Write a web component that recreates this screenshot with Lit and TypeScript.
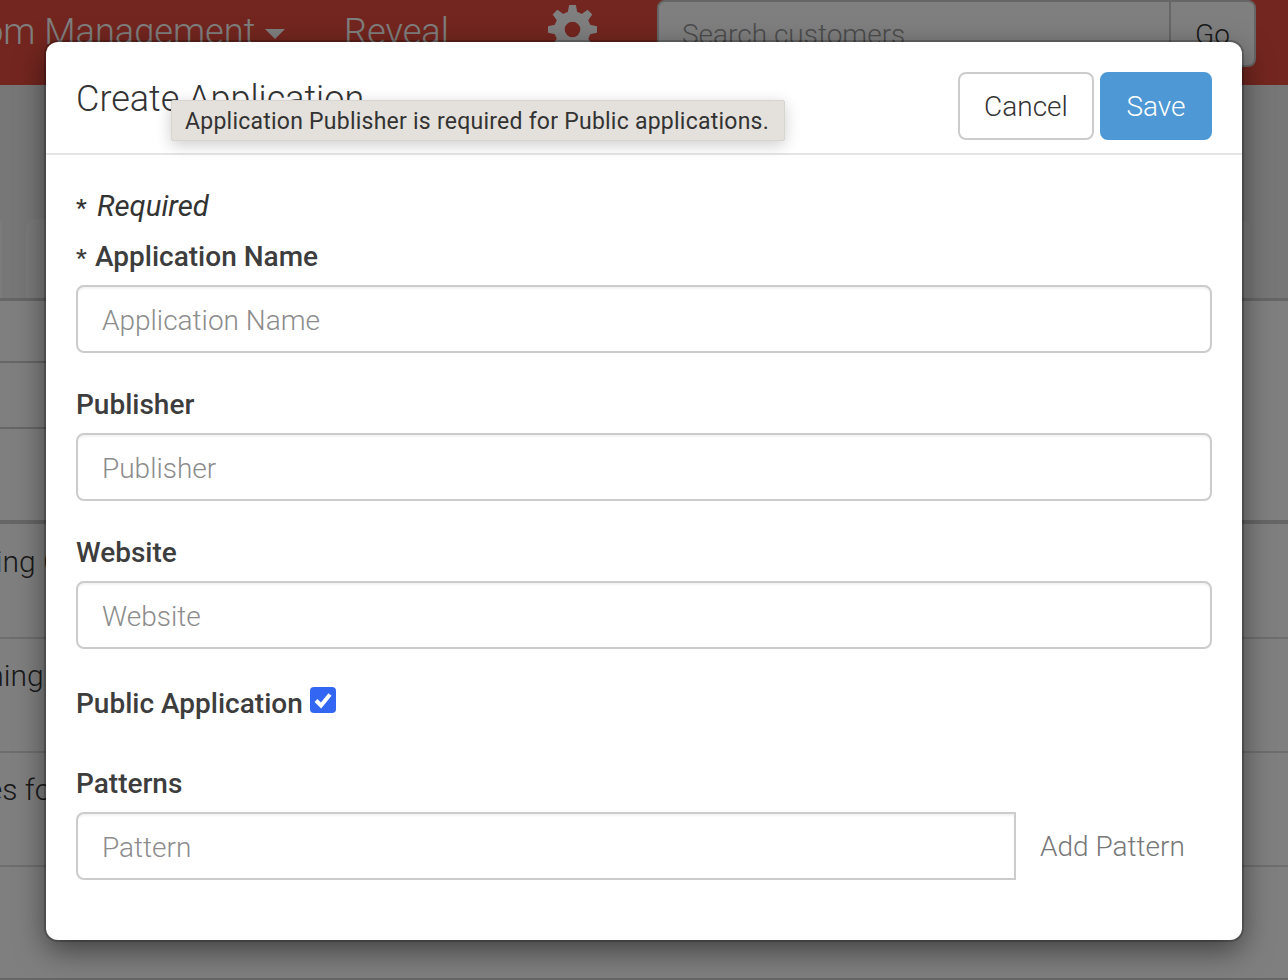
import { LitElement, html, css, svg } from "lit";
import { customElement } from "lit/decorators.js";

const gear = svg`<path fill-rule="evenodd" d="M21 0h6l1.2 6.3c1.4.4 2.8 1 4 1.700L37.600 4.300l4.200 4.200-3.700 5.300c.7 1.300 1.300 2.600 1.700 4L46 19v6l-6.200 1.200c-.4 1.400-1 2.800-1.700 4l3.700 5.300-4.200 4.200-5.400-3.700c-1.200.7-2.600 1.300-4 1.700L27 44h-6l-1.200-6.300c-1.400-.4-2.800-1-4-1.700l-5.400 3.700-4.200-4.200 3.700-5.300c-.7-1.200-1.300-2.600-1.700-4L2 25v-6l6.200-1.200c.4-1.400 1-2.700 1.700-4L6.200 8.500l4.200-4.200L15.800 8c1.200-.7 2.600-1.300 4-1.700zM24 15a7 7 0 1 0 0 14 7 7 0 0 0 0-14z"/>`;

@customElement("app-root")
export class AppRoot extends LitElement {
  static styles = css`
    :host {
      display: block;
      position: relative;
      width: 1288px;
      height: 980px;
      overflow: hidden;
      background: #fff;
      font-family: Roboto, "Liberation Sans", sans-serif;
      color: #333;
    }
    .page { display: flex; flex-direction: column; height: 980px; }
    .nav {
      flex: none;
      height: 85px;
      background: #e64c3e;
      display: flex;
      align-items: flex-start;
      color: #fff;
      font-weight: 300;
      font-size: 36.2px;
      overflow: hidden;
    }
    .nav-item { white-space: nowrap; line-height: 64px; }
    .brand { margin-left: -90px; display: flex; align-items: center; width: 434px; flex: none; }
    .caret { width: 0; height: 0; margin-left: 10px; margin-top: 3px; border: 10px solid transparent; border-top-color: #fff; border-bottom: 0; }
    .reveal { width: 204px; flex: none; }
    .gear { width: 49px; height: 49px; fill: #fff; margin-top: 5px; flex: none; }
    .search {
      flex: none;
      margin-left: 60px;
      width: 599px;
      height: 67px;
      box-sizing: border-box;
      display: flex;
      background: #fff;
      border: 2px solid #ccc;
      border-radius: 8px;
      font-size: 28px;
      color: #999;
    }
    .search-text { flex: 1; padding: 16px 23px; font-weight: 300; }
    .go { width: 85px; flex: none; border-left: 2px solid #ccc; color: #333; padding: 16px 24px; box-sizing: border-box; font-weight: 300; }
    .main { flex: 1; display: flex; flex-direction: column; min-height: 0; font-size: 30px; font-weight: 300; }
    .tabs { flex: none; height: 216px; display: flex; align-items: flex-end; box-sizing: border-box; border-bottom: 3px solid #ccc; background: #efefef; }
    .tab-gap { width: 24px; flex: none; }
    .tab { height: 79px; background: #f6f6f6; border-radius: 10px 10px 0 0; flex: none; }
    .tab-a { width: 2px; border-radius: 0 8px 0 0; }
    .tab-b { width: 1223px; }
    .tab-rest { flex: 1; }
    .sub { box-sizing: border-box; border-bottom: 2px solid #ccc; flex: none; width: 60px; }
    .sub.h1 { height: 62px; }
    .sub.h2 { height: 66px; }
    .thick { height: 95px; flex: none; border-bottom: 4px solid #ccc; box-sizing: border-box; }
    .rows { flex: 1; display: flex; flex-direction: column; }
    .row { height: 114px; flex: none; box-sizing: border-box; border-bottom: 2px solid #ddd; white-space: nowrap; overflow: hidden; padding-top: 19px; line-height: 36px; }
    .row span { display: block; }
    .row.r1 { height: 115px; padding-top: 20px; }
    .row.r1 span { margin-left: -61px; }
    .row.r2 span { margin-left: -62px; }
    .row.r3 span { margin-left: -61px; }
    .row.last { height: 113px; border-bottom-color: #ccc; }

    .backdrop { position: absolute; inset: 0; background: rgba(0, 0, 0, 0.5); }
    .modal {
      position: absolute;
      left: 46px;
      top: 42px;
      width: 1196px;
      height: 898px;
      box-sizing: border-box;
      background: #fff;
      border-radius: 12px;
      box-shadow: 0 0 0 2px rgba(0, 0, 0, 0.2), 0 10px 30px rgba(0, 0, 0, 0.5);
    }
    .header {
      height: 111px;
      box-sizing: content-box;
      border-bottom: 2px solid #e5e5e5;
      display: flex;
      align-items: flex-start;
      padding: 0 30px;
    }
    .title { flex: 1; margin: 0; font-size: 36px; font-weight: 300; line-height: 40px; padding-top: 37px; color: #333; }
    .btn { font: inherit; font-size: 28px; font-weight: 300; height: 68px; margin-top: 30px; box-sizing: border-box; border-radius: 8px; line-height: 1; padding: 2px 0 0; }
    .cancel { width: 136px; background: #fff; color: #333; border: 2px solid #ccc; }
    .save { width: 112px; margin-left: 6px; background: #4d98d5; color: #fff; border: 2px solid #4d98d5; }
    .body { padding: 33px 30px 0; }
    .req { font-size: 29.300px; line-height: 36px; height: 36px; font-style: italic; display: flex; align-items: baseline; }
    .req .star { width: 21px; }
    .star { font-style: normal; font-weight: 500; width: 19px; flex: none; font-size: 24px; }
    .label { font-size: 28px; font-weight: 500; line-height: 36px; color: #3d3d3d; display: block; }
    .app-label { margin-top: 15px; height: 36px; display: flex; align-items: baseline; }
    .field { display: block; margin-top: 10px; }
    .input {
      box-sizing: border-box;
      height: 68px;
      width: 100%;
      border: 2px solid #ccc;
      border-radius: 8px;
      padding: 2px 24px 0;
      font-size: 28px;
      font-weight: 300;
      color: #8c8c8c;
      display: flex;
      align-items: center;
      box-shadow: inset 0 2px 2px rgba(0, 0, 0, 0.05);
    }
    .group { margin-top: 34px; }
    .public { display: flex; align-items: flex-start; margin-top: 37px; }
    .check {
      width: 26px;
      height: 26px;
      margin-left: 7px;
      margin-top: 1px;
      border-radius: 4px;
      background: #3366f2;
      flex: none;
      display: block;
    }
    .patterns { margin-top: 44px; }
    .pattern-row { display: flex; align-items: center; margin-top: 10px; }
    .pattern-input { width: 940px; flex: none; border-radius: 8px 0 0 8px; }
    .add { margin-left: 24px; font-size: 28px; font-weight: 300; color: #777; }
    .tooltip {
      position: absolute;
      left: 171px;
      top: 100px;
      width: 614px;
      height: 41px;
      box-sizing: border-box;
      background: #e4e1dc;
      border: 1px solid #d8d5d0;
      border-radius: 2px;
      box-shadow: 0 4px 16px rgba(0, 0, 0, 0.2);
      font-size: 23px;
      line-height: 41px;
      padding-left: 13px;
      color: #333;
      white-space: nowrap;
      letter-spacing: 0.24px;
    }
  `;

  render() {
    return html`
      <div class="page">
        <div class="nav">
          <div class="nav-item brand">Custom Management<span class="caret"></span></div>
          <div class="nav-item reveal">Reveal</div>
          <svg class="gear" viewBox="2 0 44 44">${gear}</svg>
          <div class="search">
            <div class="search-text">Search customers</div>
            <div class="go">Go</div>
          </div>
        </div>
        <div class="main">
          <div class="tabs">
            <div class="tab tab-a"></div>
            <div class="tab-gap"></div>
            <div class="tab tab-b"></div>
            <div class="tab-rest"></div>
          </div>
          <div class="sub h1"></div>
          <div class="sub h2"></div>
          <div class="thick"></div>
          <div class="rows">
            <div class="row r1"><span>Testing Guide</span></div>
            <div class="row r2"><span>Training</span></div>
            <div class="row r3"><span>Notes for</span></div>
            <div class="row last"></div>
          </div>
        </div>
      </div>
      <div class="backdrop"></div>
      <div class="modal">
        <div class="header">
          <h2 class="title">Create Application</h2>
          <button class="btn cancel">Cancel</button>
          <button class="btn save">Save</button>
        </div>
        <div class="body">
          <div class="req"><span class="star">*</span>Required</div>
          <div class="label app-label"><span class="star">*</span>Application Name</div>
          <div class="field"><div class="input">Application Name</div></div>
          <div class="group">
            <div class="label">Publisher</div>
            <div class="field"><div class="input">Publisher</div></div>
          </div>
          <div class="group">
            <div class="label">Website</div>
            <div class="field"><div class="input">Website</div></div>
          </div>
          <div class="public">
            <div class="label">Public Application</div>
            <svg class="check" viewBox="0 0 26 26"><path d="M6 13.500l5 5 9-11" fill="none" stroke="#fff" stroke-width="4"/></svg>
          </div>
          <div class="patterns">
            <div class="label">Patterns</div>
            <div class="pattern-row">
              <div class="input pattern-input">Pattern</div>
              <div class="add">Add Pattern</div>
            </div>
          </div>
        </div>
      </div>
      <div class="tooltip">Application Publisher is required for Public applications.</div>
    `;
  }
}
